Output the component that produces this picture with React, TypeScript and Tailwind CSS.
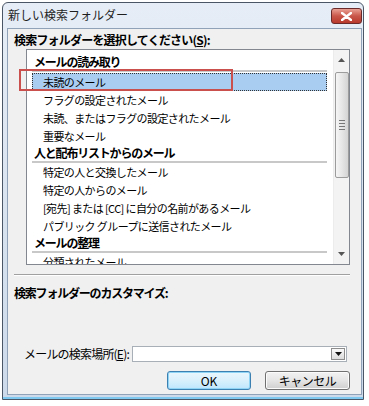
import React from 'react'

const readItems = ['未読のメール', 'フラグの設定されたメール', '未読、またはフラグの設定されたメール', '重要なメール']
const peopleItems = ['特定の人と交換したメール', '特定の人からのメール', '[宛先] または [CC] に自分の名前があるメール', 'パブリック グループに送信されたメール']

function Header({ label }: { label: string }) {
  return (
    <div className="flex flex-col">
      <div className="h-[16px] pl-[7px] flex items-center font-bold leading-none tracking-[-1.2px] whitespace-nowrap">{label}</div>
      <div className="ml-[5px] mr-[6px] h-[2px] bg-[#c8c8c8]" />
    </div>
  )
}

function Item({ label, selected }: { label: string; selected?: boolean }) {
  return (
    <div
      className={
        selected
          ? 'ml-[5px] mr-[6px] h-[18px] pl-[10px] flex items-center whitespace-nowrap text-[11px] tracking-[-0.6px] bg-[#a9cdf1] border border-dotted border-[#333]'
          : 'ml-[5px] mr-[6px] h-[18px] pl-[11px] flex items-center whitespace-nowrap text-[11px] tracking-[-0.6px]'
      }
    >
      {label}
    </div>
  )
}

function Scrollbar() {
  return (
    <div className="w-[16px] flex flex-col items-center bg-[#f3f3f3] border-l border-[#ececec]">
      <div className="h-[20px] flex items-center justify-center">
        <svg width="7" height="4" viewBox="0 0 7 4"><path d="M0 4 L3.5 0 L7 4 Z" fill="#555" /></svg>
      </div>
      <div className="mt-[2px] w-[14px] h-[106px] rounded-[2px] border border-[#9c9c9c] bg-gradient-to-r from-[#f6f6f6] via-[#e6e6e6] to-[#d4d4d4] flex flex-col items-center justify-center gap-[2px]">
        <div className="w-[6px] h-[1px] bg-[#777]" />
        <div className="w-[6px] h-[1px] bg-[#777]" />
        <div className="w-[6px] h-[1px] bg-[#777]" />
        <div className="w-[6px] h-[1px] bg-[#777]" />
      </div>
      <div className="flex-1" />
      <div className="h-[20px] flex items-center justify-center">
        <svg width="7" height="4" viewBox="0 0 7 4"><path d="M0 0 L3.5 4 L7 0 Z" fill="#555" /></svg>
      </div>
    </div>
  )
}

export default function App() {
  return (
    <div className="relative w-[369px] h-[406px] bg-white pt-[2px] pl-[2px] text-[12px] text-black font-['Noto_Sans_CJK_JP',sans-serif]">
      <div className="w-[362px] h-[398px] border border-[#4a5566] rounded-t-[6px] bg-gradient-to-b from-[#e6edf6] to-[#cddaea] flex flex-col">
        {/* title bar */}
        <div className="h-[25px] flex items-start justify-between pl-[5px] pr-[1px]">
          <div className="mt-[4px] leading-[16px] text-[#1e1e1e]">新しい検索フォルダー</div>
          <div className="mt-[5px] w-[31px] h-[16px] rounded-[3px] border border-[#6b2a2a] bg-gradient-to-b from-[#e8a093] via-[#c9564a] to-[#b8392c] flex items-center justify-center">
            <svg width="11" height="9" viewBox="0 0 11 9">
              <path d="M1 1 L10 8 M10 1 L1 8" stroke="#fff" strokeWidth="2.4" strokeLinecap="round" />
            </svg>
          </div>
        </div>

        {/* client area */}
        <div className="ml-[4px] mr-[1px] h-[367px] border border-[#8fa2b8] bg-[#f0f0f0] flex flex-col">
          <div className="pl-[6px] mt-[3px] leading-[16px] font-bold tracking-[-0.8px] whitespace-nowrap">検索フォルダーを選択してください(<span className="underline">S</span>):</div>

          <div className="ml-[18px] mt-[1px] w-[324px] h-[216px] border border-[#828790] bg-white flex">
            <div className="flex-1 overflow-hidden pt-[4px]">
              <Header label="メールの読み取り" />
              <div className="h-[1px]" />
              {readItems.map((t, i) => (
                <Item key={t} label={t} selected={i === 0} />
              ))}
              <Header label="人と配布リストからのメール" />
              {peopleItems.map((t) => (
                <Item key={t} label={t} />
              ))}
              <Header label="メールの整理" />
              <Item label="分類されたメール" />
            </div>
            <Scrollbar />
          </div>

          <div className="ml-[6px] mt-[9px] w-[336px] h-[1px] bg-[#a0a0a0] border-b border-white box-content" />
          <div className="pl-[6px] mt-[9px] leading-[16px] font-bold tracking-[-1.2px] whitespace-nowrap">検索フォルダーのカスタマイズ:</div>

          <div className="flex-1" />

          <div className="flex items-center pl-[16px]">
            <div className="w-[108px] shrink-0 leading-[16px] whitespace-nowrap tracking-[-0.8px]">メールの検索場所(<span className="underline">E</span>):</div>
            <div className="w-[215px] h-[16px] border border-[#a9afb6] bg-white flex justify-end items-center pr-[1px]">
              <div className="w-[14px] h-[12px] border border-[#8d8d8d] bg-gradient-to-b from-[#fafafa] to-[#dcdcdc] flex items-center justify-center">
                <svg width="7" height="4" viewBox="0 0 7 4"><path d="M0 0 L3.5 4 L7 0 Z" fill="#111" /></svg>
              </div>
            </div>
          </div>

          <div className="flex justify-end gap-[14px] pr-[11px] mt-[9px] mb-[4px]">
            <div className="w-[84px] h-[19px] rounded-[3px] border border-[#3c7fb1] bg-gradient-to-b from-[#eaf6fd] via-[#d9f0fc] to-[#bee6fd] shadow-[inset_0_0_0_1px_#8fd3f5] flex items-center justify-center leading-none">OK</div>
            <div className="w-[85px] h-[19px] rounded-[3px] border border-[#707070] bg-gradient-to-b from-[#f2f2f2] via-[#e5e5e5] to-[#cfcfcf] shadow-[inset_0_0_0_1px_#fbfbfb] flex items-center justify-center leading-none tracking-[-0.5px]">キャンセル</div>
          </div>
        </div>
        <div className="flex-1 border-b-[2px] border-[#7ec8f0]" />
      </div>

      {/* red annotation box */}
      <div className="absolute left-[19px] top-[69px] w-[214px] h-[22px] border-2 border-[#c9504c]" />
    </div>
  )
}
